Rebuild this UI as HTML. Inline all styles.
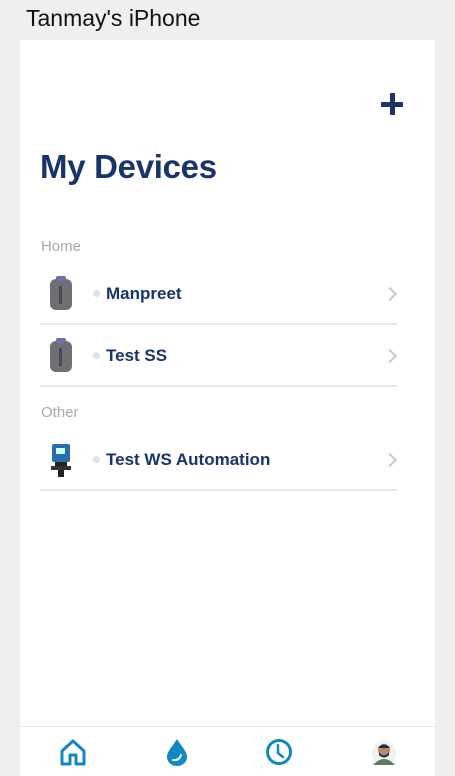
<!DOCTYPE html>
<html><head><meta charset="utf-8"><style>
*{margin:0;padding:0;box-sizing:border-box}
body{width:455px;height:776px;background:#efefef;font-family:"Liberation Sans",sans-serif;position:relative;overflow:hidden}
.title{position:absolute;left:26px;top:5px;font-size:23px;color:#111;font-family:"Liberation Sans",sans-serif;letter-spacing:0px}
.panel{position:absolute;left:20px;top:40px;width:415px;height:736px;background:#fff}
.plus{position:absolute;left:381px;top:93px;width:22px;height:22px}
.plus:before,.plus:after{content:"";position:absolute;background:#1b3568;border-radius:1px}
.plus:before{left:8.5px;top:0;width:5px;height:22px}
.plus:after{left:0;top:8.5px;width:22px;height:5px}
h1{position:absolute;left:40px;top:148px;font-size:33px;font-weight:bold;color:#17356b;letter-spacing:-0.3px}
.sec{position:absolute;left:41px;font-size:15px;color:#a9a9a9}
.row{position:absolute;left:40px;width:357px;height:62px;border-bottom:2px solid #e8e8e8}
.row .img{position:absolute;left:8px;top:13px;width:26px;height:36px}
.row .dot{position:absolute;left:53px;top:27px;width:7px;height:7px;border-radius:50%;background:#dde1e8}
.row .name{position:absolute;left:66px;top:21px;font-size:17px;font-weight:bold;color:#17356b}
.row .chev{position:absolute;right:2px;top:26px;width:10px;height:10px;border-right:2px solid #c8c8c8;border-top:2px solid #c8c8c8;transform:rotate(45deg)}
.tab{position:absolute;left:20px;top:726px;width:415px;height:50px;background:#fff;border-top:1px solid #e6e6e6}
</style></head><body>
<div class="title">Tanmay's iPhone</div>
<div class="panel"></div>
<div class="plus"></div>
<h1>My Devices</h1>
<div class="sec" style="top:238px">Home</div>
<div class="row" style="top:263px"><svg class="img" viewBox="0 0 26 36"><rect x="2" y="3" width="22" height="31" rx="6" fill="#6f7074"/><rect x="8" y="0" width="10" height="5" rx="2" fill="#6d6fb0"/><rect x="11" y="10" width="3" height="18" fill="#4a4b4f"/></svg><div class="dot"></div><div class="name">Manpreet</div><div class="chev"></div></div>
<div class="row" style="top:325px"><svg class="img" viewBox="0 0 26 36"><rect x="2" y="3" width="22" height="31" rx="6" fill="#6f7074"/><rect x="8" y="0" width="10" height="5" rx="2" fill="#6d6fb0"/><rect x="11" y="10" width="3" height="18" fill="#4a4b4f"/></svg><div class="dot"></div><div class="name">Test SS</div><div class="chev"></div></div>
<div class="sec" style="top:404px">Other</div>
<div class="row" style="top:429px"><svg class="img" viewBox="0 0 26 36"><rect x="4" y="2" width="18" height="18" rx="2" fill="#2b6bb0"/><rect x="8" y="6" width="9" height="6" fill="#cfe"/><rect x="7" y="20" width="12" height="8" fill="#222"/><rect x="3" y="24" width="20" height="4" fill="#333"/><rect x="10" y="28" width="6" height="7" fill="#222"/></svg><div class="dot"></div><div class="name">Test WS Automation</div><div class="chev"></div></div>
<div class="tab">
<svg style="position:absolute;left:39px;top:11px" width="28" height="28" viewBox="0 0 28 28"><path d="M3 13 L14 3 L25 13 V26 H17 V17 H11 V26 H3 Z" fill="none" stroke="#0f89c0" stroke-width="3" stroke-linejoin="round"/></svg>
<svg style="position:absolute;left:145px;top:11px" width="24" height="28" viewBox="0 0 24 28"><path d="M12 1 C8 8 2 13 2 19 A10 9 0 0 0 22 19 C22 13 16 8 12 1 Z" fill="#0f89c0"/><path d="M8 22 Q14 23 16 17" fill="none" stroke="#fff" stroke-width="2" stroke-linecap="round"/></svg>
<svg style="position:absolute;left:245px;top:11px" width="28" height="28" viewBox="0 0 28 28"><circle cx="14" cy="14" r="11.5" fill="none" stroke="#0f89c0" stroke-width="3"/><path d="M13 7 V15 L18 19" fill="none" stroke="#0f89c0" stroke-width="2.5" stroke-linecap="round"/></svg>
<svg style="position:absolute;left:351px;top:12px" width="26" height="28" viewBox="0 0 26 28"><circle cx="13" cy="14" r="12" fill="#f2f2f2"/><path d="M2 26 Q13 14 24 26 Z" fill="#5a7d5e"/><circle cx="13" cy="11" r="6" fill="#b88a6a"/><path d="M7 9 Q13 2 19 9 Z" fill="#2a2a2a"/><path d="M8 13 Q13 20 18 13 L18 16 Q13 21 8 16Z" fill="#2a2a2a"/></svg>
</div>
</body></html>
